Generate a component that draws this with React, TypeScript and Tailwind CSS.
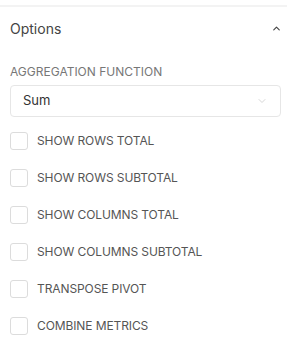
import { ChevronDown, ChevronUp } from "lucide-react";

const options = [
  "Show rows total",
  "Show rows subtotal",
  "Show columns total",
  "Show columns subtotal",
  "Transpose pivot",
  "Combine metrics",
];

export default function App() {
  return (
    <div className="w-[296px] h-[362px] bg-white font-['Inter',sans-serif]">
      <div className="pt-[5px]">
        <div className="h-[2px] w-[287px] bg-[#f3f3f3]" />
      </div>
      <div className="flex items-center justify-between pl-[10px] pr-[14px] h-[43px]">
        <span className="text-[14px] text-[#444]">Options</span>
        <ChevronUp className="w-[11px] h-[11px] text-[#444]" strokeWidth={2.5} />
      </div>
      <div className="pl-[10px] pr-[15px]">
        <div className="text-[12px] text-[#777] uppercase mt-[15px] leading-[14px]">
          Aggregation function
        </div>
        <div className="mt-[6px] h-[32px] border border-[#e6e6e6] rounded-[4px] flex items-center justify-between pl-[12px] pr-[12px]">
          <span className="text-[13px] text-[#333]">Sum</span>
          <ChevronDown className="w-[12px] h-[12px] text-[#c8c8c8]" strokeWidth={1.5} />
        </div>
        <div className="mt-[15px] flex flex-col gap-[19px]">
          {options.map((o) => (
            <label key={o} className="flex items-center gap-[9px] h-[18px]">
              <span className="w-[18px] h-[18px] border border-[#dcdcdc] rounded-[3px] bg-white" />
              <span className="text-[12px] text-[#555] uppercase tracking-[-0.1px]">{o}</span>
            </label>
          ))}
        </div>
      </div>
    </div>
  );
}
